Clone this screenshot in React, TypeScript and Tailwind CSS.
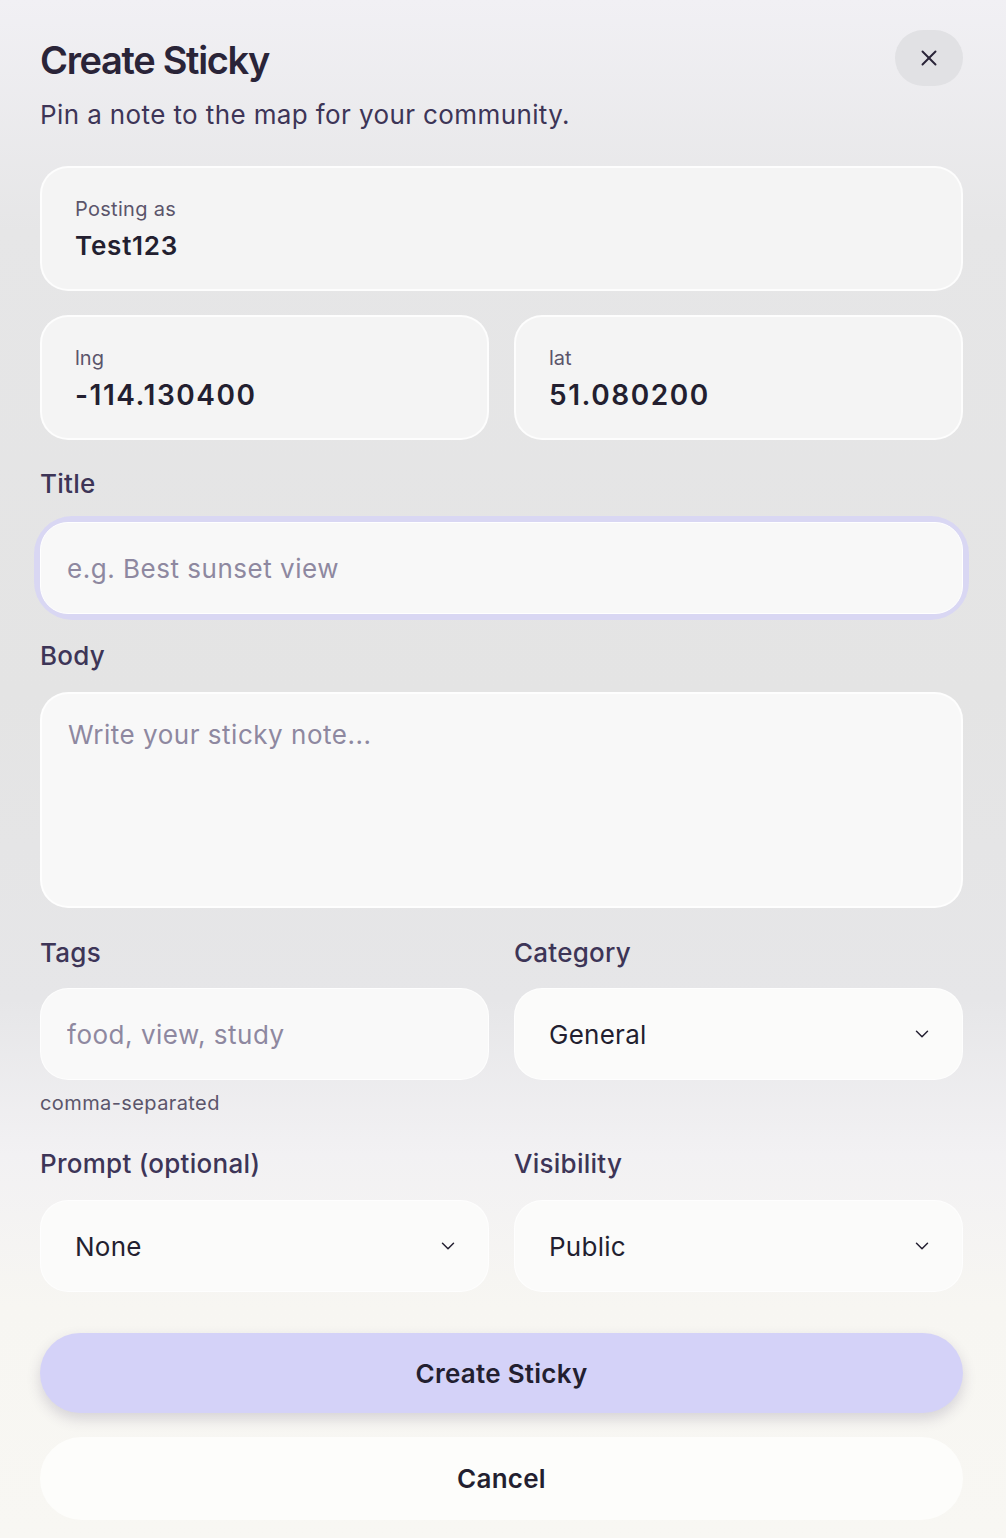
import { ChevronDown, X } from "lucide-react";

const CATEGORIES = ["General", "Food", "View", "Study"];
const PROMPTS = ["None"];
const VISIBILITY = ["Public", "Private"];

function SelectBox({ value, options }: { value: string; options: string[] }) {
  return (
    <div className="relative">
      <select
        defaultValue={value}
        className="h-[92px] w-full appearance-none rounded-[28px] border border-white/80 bg-[#fbfbfa] pl-[34px] pr-14 text-[26px] tracking-[0.01em] text-[#231f30] outline-none"
      >
        {options.map((o) => (
          <option key={o}>{o}</option>
        ))}
      </select>
      <ChevronDown className="pointer-events-none absolute right-[30px] top-1/2 h-[22px] w-[22px] -translate-y-1/2 text-[#231f30]" strokeWidth={1.6} />
    </div>
  );
}

export default function App() {
  return (
    <div
      className="min-h-[1538px] w-full bg-[linear-gradient(180deg,#f1f0f4_0%,#e6e6e7_15%,#e4e4e4_45%,#e6e6e8_65%,#f2f1f3_75%,#f7f6f2_85%,#f8f7f3_100%)] px-10 pb-4 pt-[30px] text-[#231f30]"
      style={{ fontFamily: "Inter, 'Noto Sans', sans-serif" }}
    >
      <div className="mr-[3px]">
        <div className="flex items-start justify-between">
          <div>
            <h1 className="mt-[8px] text-[38px] font-semibold leading-[44px] tracking-[-0.035em] text-[#2a2438]">Create Sticky</h1>
            <p className="mt-[16px] text-[26px] leading-[34px] tracking-[0.015em] text-[#3d3557]">Pin a note to the map for your community.</p>
          </div>
          <button className="flex h-[56px] w-[68px] items-center justify-center rounded-full bg-[#e1e1e4] text-[#2a2438]">
            <X className="h-[26px] w-[26px]" strokeWidth={1.8} />
          </button>
        </div>

        <div className="mt-[34px] rounded-[28px] border-2 border-white/80 bg-[#f4f4f4] px-[33px] pb-[26px] pt-[27px]">
          <div className="text-[20px] leading-[28px] tracking-[0.015em] text-[#5b556b]">Posting as</div>
          <div className="mt-[6px] text-[26px] font-semibold leading-[34px] tracking-[0.03em] text-[#231f30]">Test123</div>
        </div>

        <div className="mt-[24px] grid grid-cols-2 gap-[25px]">
          {[
            ["lng", "-114.130400"],
            ["lat", "51.080200"],
          ].map(([k, v]) => (
            <div key={k} className="rounded-[28px] border-2 border-white/80 bg-[#f4f4f4] px-[33px] pb-[26px] pt-[27px]">
              <div className="text-[20px] leading-[28px] text-[#5b556b]">{k}</div>
              <div className="mt-[6px] text-[28px] font-semibold leading-[34px] tracking-[0.055em] text-[#231f30]">{v}</div>
            </div>
          ))}
        </div>

        <label className="mt-[27px] block text-[26px] font-medium leading-[34px] tracking-[0.01em] text-[#3d3557]">Title</label>
        <div className="mt-[21px] rounded-[32px] ring-[6px] ring-[#d9d7f3]">
          <input
            placeholder="e.g. Best sunset view"
            className="h-[92px] w-full rounded-[28px] border border-white bg-[#f8f8f8] px-[26px] text-[26px] tracking-[0.02em] text-[#231f30] outline-none placeholder:text-[#8e88a0]"
          />
        </div>

        <label className="mt-[25px] block text-[26px] font-medium leading-[34px] tracking-[0.01em] text-[#3d3557]">Body</label>
        <textarea
          placeholder="Write your sticky note..."
          className="mt-[19px] block h-[216px] w-full resize-none rounded-[28px] border-2 border-white/80 bg-[#f8f8f8] px-[26px] pb-[26px] pt-[24px] text-[26px] leading-[34px] tracking-[0.02em] text-[#231f30] outline-none placeholder:text-[#8e88a0]"
        />

        <div className="mt-[28px] grid grid-cols-2 gap-[25px]">
          <div>
            <label className="block text-[26px] font-medium leading-[34px] tracking-[0.01em] text-[#3d3557]">Tags</label>
            <input
              placeholder="food, view, study"
              className="mt-[18px] h-[92px] w-full rounded-[28px] border border-white/80 bg-[#f9f9f9] px-[26px] text-[26px] tracking-[0.02em] text-[#231f30] outline-none placeholder:text-[#8e88a0]"
            />
            <div className="mt-[10px] text-[20px] leading-[26px] tracking-[0.02em] text-[#5b556b]">comma-separated</div>
          </div>
          <div>
            <label className="block text-[26px] font-medium leading-[34px] tracking-[0.01em] text-[#3d3557]">Category</label>
            <div className="mt-[18px]">
              <SelectBox value="General" options={CATEGORIES} />
            </div>
          </div>
        </div>

        <div className="mt-[31px] grid grid-cols-2 gap-[25px]">
          <div>
            <label className="block text-[26px] font-medium leading-[34px] tracking-[0.01em] text-[#3d3557]">Prompt (optional)</label>
            <div className="mt-[19px]">
              <SelectBox value="None" options={PROMPTS} />
            </div>
          </div>
          <div>
            <label className="block text-[26px] font-medium leading-[34px] tracking-[0.01em] text-[#3d3557]">Visibility</label>
            <div className="mt-[19px]">
              <SelectBox value="Public" options={VISIBILITY} />
            </div>
          </div>
        </div>

        <button className="mt-[41px] h-[80px] w-full rounded-full bg-[#d4d2f8] text-[26px] font-semibold tracking-[0.01em] text-[#231f30] shadow-[0_6px_14px_rgba(60,50,90,0.18)]">
          Create Sticky
        </button>
        <button className="mt-[24px] h-[83px] w-full rounded-full bg-[#fdfdfb] text-[26px] font-semibold tracking-[0.01em] text-[#231f30]">
          Cancel
        </button>
      </div>
    </div>
  );
}
